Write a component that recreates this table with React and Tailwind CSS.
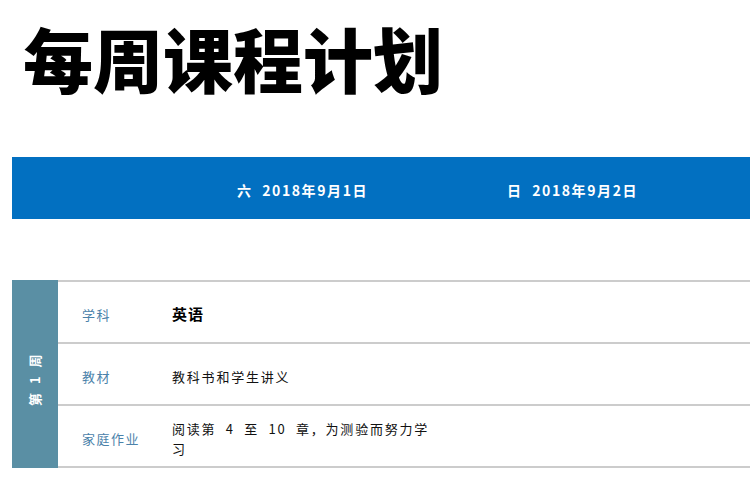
import React from 'react'

const font = { fontFamily: '"Noto Sans CJK SC", "Noto Sans", sans-serif' }

const rows = [
  { label: '学科', value: '英语', bold: true },
  { label: '教材', value: '教科书和学生讲义' },
  { label: '家庭作业', value: '阅读第  4  至  10  章，为测验而努力学习' },
]

export default function App() {
  return (
    <div className="w-[750px] h-[501px] overflow-hidden bg-white" style={font}>
      <h1 className="pt-[23px] pl-[23px] text-[70px] leading-[70px] font-black text-black">
        每周课程计划
      </h1>

      <div className="mt-[64px] ml-[12px] h-[62px] pt-[4px] bg-[#0270c1] flex items-center text-white text-[14px] font-bold tracking-[1.6px]">
        <div className="w-[225px] shrink-0" />
        <div className="w-[270px] shrink-0 whitespace-pre">六  2018年9月1日</div>
        <div className="w-[243px] shrink-0 whitespace-pre">日  2018年9月2日</div>
      </div>

      <div className="mt-[61px] ml-[12px] flex">
        <div className="w-[46px] shrink-0 bg-[#5a8fa4] flex items-center justify-center pt-[12px]">
          <span className="-rotate-90 whitespace-pre text-white text-[13px] font-bold tracking-[1px]">
            第  1  周
          </span>
        </div>
        <div className="flex-1 flex flex-col border-b-2 border-[#cccccc]">
          {rows.map((r) => (
            <div key={r.label} className="h-[62px] border-t-2 border-[#cccccc] flex items-center pt-[5px]">
              <div className="w-[114px] shrink-0 pl-[24px] text-[13px] text-[#4b82aa] tracking-[1.5px]">
                {r.label}
              </div>
              <div
                className={
                  r.bold
                    ? 'w-[270px] text-[15px] font-bold text-black tracking-[1px]'
                    : 'w-[262px] text-[13px] leading-[20px] text-[#111111] tracking-[1.8px] whitespace-pre-wrap'
                }
              >
                {r.value}
              </div>
            </div>
          ))}
        </div>
      </div>
    </div>
  )
}
